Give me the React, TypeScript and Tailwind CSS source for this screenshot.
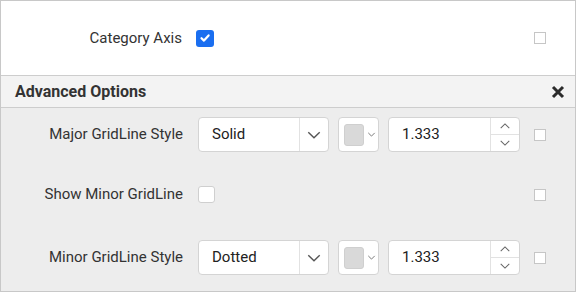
import React from "react";

const Chevron: React.FC<{ up?: boolean; size?: number; className?: string }> = ({ up, size = 14, className }) => (
  <svg width={size} height={size} viewBox="0 0 14 14" className={className} fill="none" stroke="currentColor" strokeWidth="1.2">
    {up ? <path d="M2 9.5 L7 4.5 L12 9.5" /> : <path d="M2 4.5 L7 9.5 L12 4.5" />}
  </svg>
);

const SmallBox: React.FC = () => (
  <div className="w-[12px] h-[12px] border border-[#c6c6c6] bg-white" />
);

const StyleRow: React.FC<{ label: string; value: string }> = ({ label, value }) => (
  <div className="flex items-center h-[35px]">
    <div className="w-[182px] text-right text-[15px] text-[#333]">{label}</div>
    <div className="ml-[15px] flex h-[35px] w-[131px] bg-white border border-[#d4d4d4] rounded-[4px]">
      <div className="flex-1 flex items-center pl-[13px] text-[15px] text-[#222]">{value}</div>
      <div className="w-[29px] border-l border-[#e2e2e2] flex items-center justify-center text-[#555]">
        <Chevron size={16} />
      </div>
    </div>
    <div className="ml-[9px] flex items-center h-[35px] w-[41px] bg-white border border-[#d4d4d4] rounded-[4px] pl-[5px]">
      <div className="w-[20px] h-[22px] bg-[#d9d9d9] border border-[#cfcfcf] rounded-[3px]" />
      <Chevron size={9} className="ml-[3px] text-[#555]" />
    </div>
    <div className="ml-[9px] flex h-[35px] w-[132px] bg-white border border-[#d4d4d4] rounded-[4px]">
      <div className="flex-1 flex items-center pl-[13px] text-[15px] text-[#222]">1.333</div>
      <div className="w-[29px] border-l border-[#e2e2e2] flex flex-col text-[#666]">
        <div className="flex-1 flex items-center justify-center border-b border-[#e2e2e2]">
          <Chevron up size={12} />
        </div>
        <div className="flex-1 flex items-center justify-center">
          <Chevron size={12} />
        </div>
      </div>
    </div>
    <div className="ml-[14px]">
      <SmallBox />
    </div>
  </div>
);

export default function App() {
  return (
    <div className="w-[576px] h-[292px] border border-[#c8c8c8] bg-[#ededed] flex flex-col" style={{ fontFamily: "Roboto, 'Liberation Sans', sans-serif" }}>
      <div className="h-[75px] bg-white flex items-center border-b border-[#cdcdcd]">
        <div className="w-[181px] text-right text-[15px] text-[#333]">Category Axis</div>
        <div className="ml-[14px] w-[18px] h-[17px] rounded-[3px] bg-[#1a6ef0] flex items-center justify-center">
          <svg width="12" height="12" viewBox="0 0 12 12" fill="none" stroke="white" strokeWidth="2.2" strokeLinecap="round" strokeLinejoin="round">
            <path d="M2.5 6.2 L5 8.6 L9.6 3.4" />
          </svg>
        </div>
        <div className="ml-auto mr-[29px]">
          <SmallBox />
        </div>
      </div>
      <div className="h-[32px] bg-[#f3f3f3] border-b border-[#cdcdcd] flex items-center pl-[14px] pr-[10px]">
        <div className="text-[16px] font-bold text-[#333]">Advanced Options</div>
        <div className="ml-auto text-[#2b2b2b]">
          <svg width="14" height="14" viewBox="0 0 14 14" stroke="currentColor" strokeWidth="3">
            <path d="M2 2 L12 12 M12 2 L2 12" />
          </svg>
        </div>
      </div>
      <div className="flex flex-col pt-[9px]">
        <StyleRow label="Major GridLine Style" value="Solid" />
        <div className="flex items-center h-[35px] mt-[25px]">
          <div className="w-[182px] text-right text-[15px] text-[#333]">Show Minor GridLine</div>
          <div className="ml-[15px] w-[17px] h-[17px] bg-white border border-[#cfcfcf] rounded-[3px]" />
          <div className="ml-auto mr-[29px]">
            <SmallBox />
          </div>
        </div>
        <div className="mt-[28px]">
          <StyleRow label="Minor GridLine Style" value="Dotted" />
        </div>
      </div>
    </div>
  );
}
